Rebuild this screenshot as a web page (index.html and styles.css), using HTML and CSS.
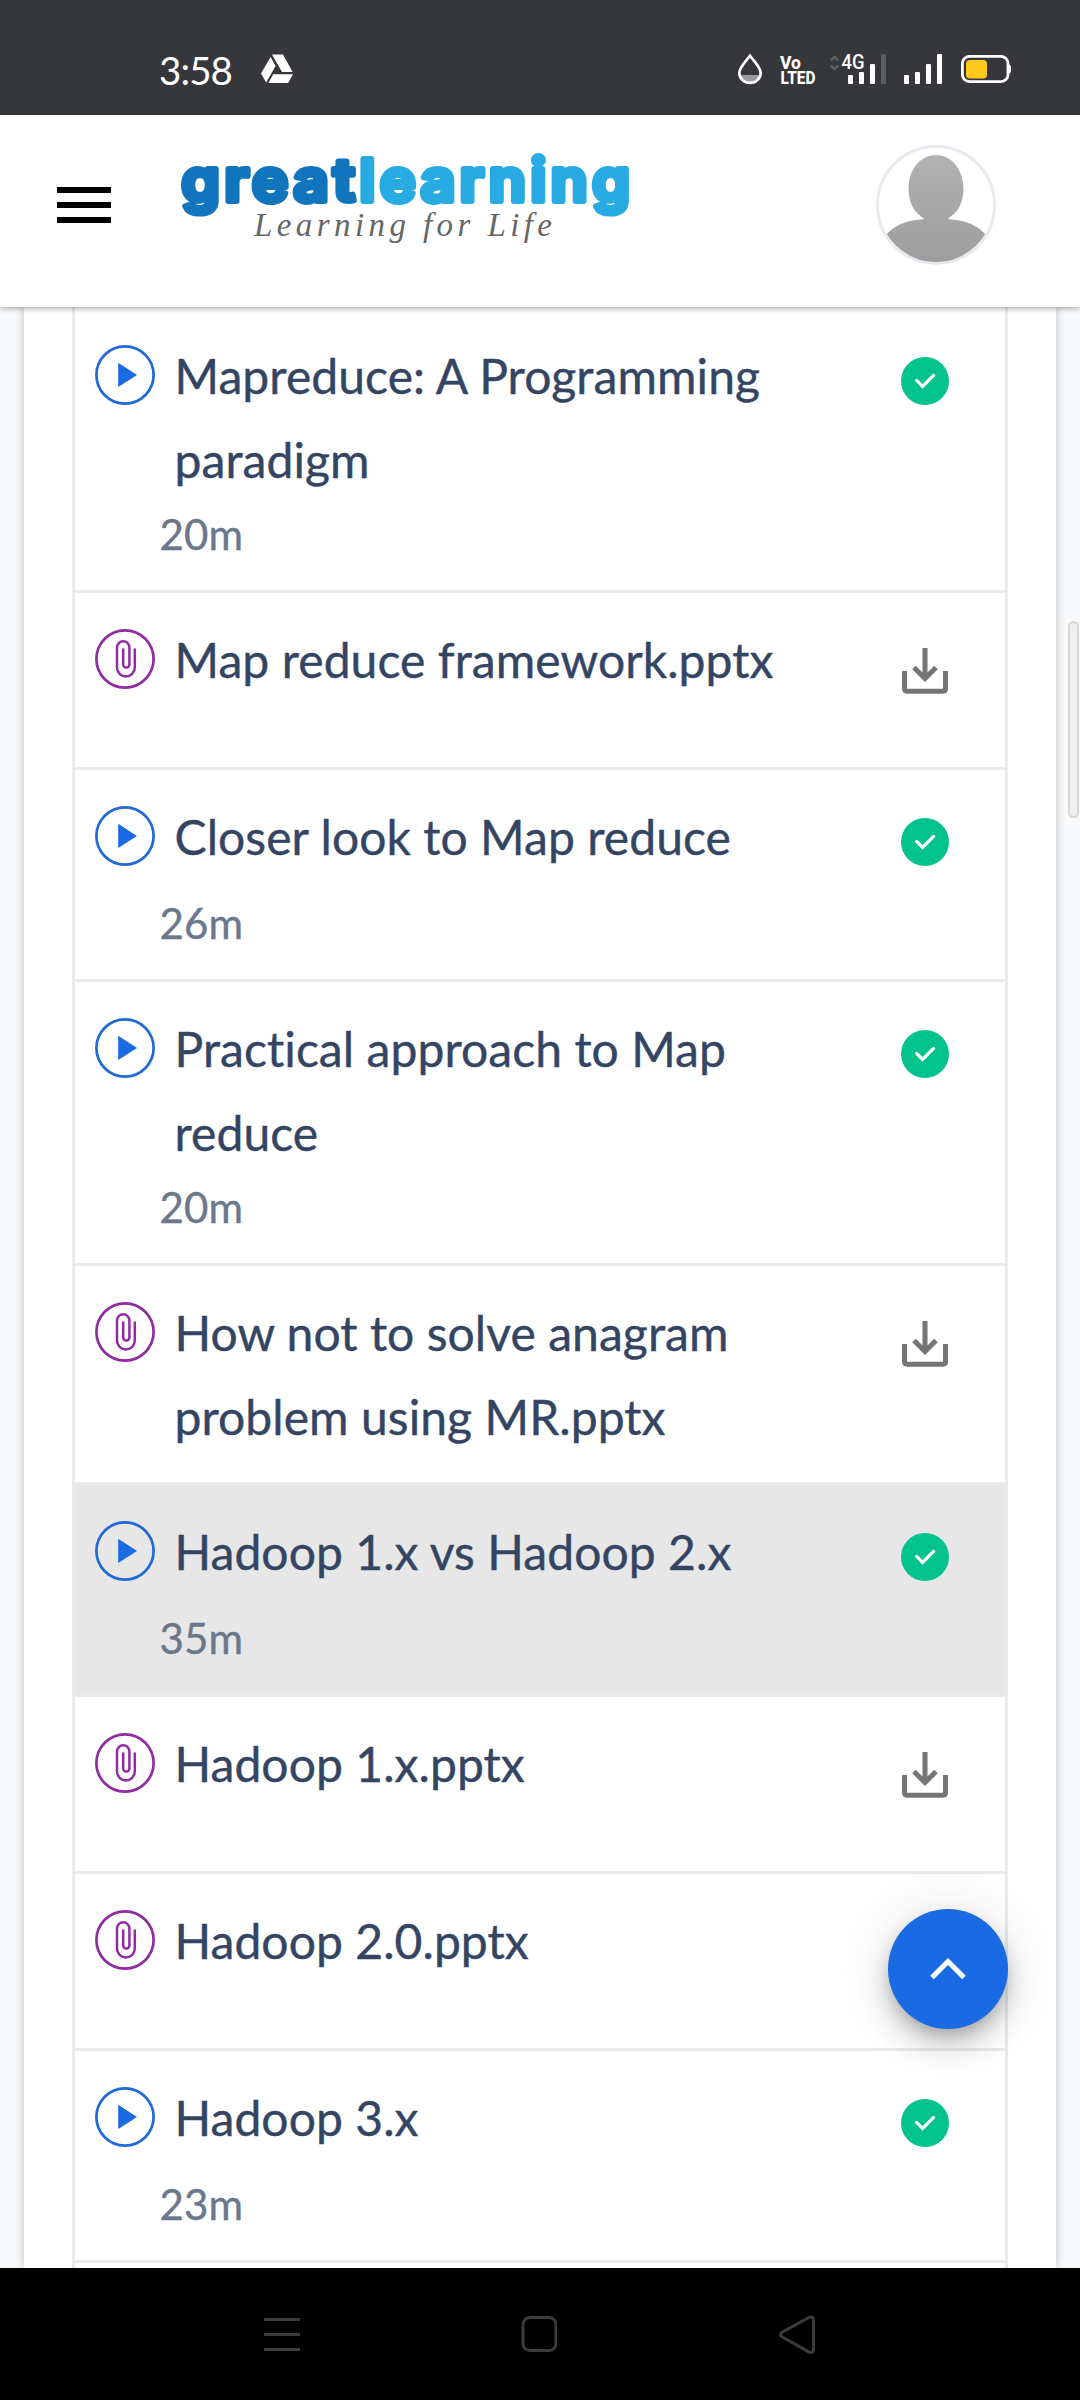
FILE: index.html
```html
<!DOCTYPE html>
<html lang="en">
<head>
<meta charset="utf-8">
<title>Great Learning</title>
<link rel="stylesheet" href="styles.css">
</head>
<body>
<svg width="0" height="0" class="sprite">
  <symbol id="play" viewBox="0 0 60 60"><circle cx="30" cy="30" r="28.6" fill="none" stroke="#1f69d8" stroke-width="2.7"/><path d="M23.2 17.7V42L42 29.9z" fill="#1a6ae4"/></symbol>
  <symbol id="clip" viewBox="0 0 60 60"><g fill="none" stroke="#902ba2" stroke-width="2.7"><circle cx="30" cy="30" r="28.6"/><path stroke-width="2.5" d="M39.8 19.5V38.5a8.9 8.9 0 0 1-17.8 0V18.5a6.2 6.2 0 0 1 12.4 0V35.5a3.1 3.1 0 0 1-6.2 0V19.5"/></g></symbol>
  <symbol id="done" viewBox="0 0 48 48"><circle cx="24" cy="24" r="24" fill="#02c38e"/><path d="M15.6 23.4 21.6 29.4 32.6 18.4" fill="none" stroke="#fff" stroke-width="3.2" stroke-linecap="round"/></symbol>
  <symbol id="download" viewBox="0 0 48 48"><g fill="none" stroke="#757575" stroke-width="5"><path d="M24 0V29M13 19.5 24 30.5 35 19.5"/><path d="M3.5 23V40.5Q3.5 43.2 6.2 43.2H41.8Q44.5 43.2 44.5 40.5V23"/></g></symbol>
</svg>
<div class="screen">
  <div class="status">
    <span class="clock">3:58</span>
    <svg class="drive" width="32" height="30" viewBox="261 54 32 30" fill="#fff"><path d="M272 54.4h11L292.6 72H282zM270.6 57l5 9-9.4 16.4-5.2-9zM273.2 74.3H293L288.2 83H268.4z"/></svg>
    <svg class="indicators" width="274" height="34" viewBox="738 52 274 34">
      <path d="M740.5 75h19c-1 5-5 7.500-9.500 7.500s-8.500-2.500-9.500-7.500z" fill="#9b9b9d"/>
      <path d="M750 55.800C746 61 739.300 67 739.300 73a10.700 9.800 0 0 0 21.400 0C760.700 67 754 61 750 55.800z" fill="none" stroke="#fff" stroke-width="2.700"/>
      <g fill="#fff" font-family="Roboto, sans-serif">
        <text x="780" y="68.500" font-size="19" font-weight="800" textLength="21" lengthAdjust="spacingAndGlyphs">Vo</text>
        <text x="780.500" y="84" font-size="19" font-weight="800" textLength="35" lengthAdjust="spacingAndGlyphs">LTED</text>
        <text x="841.500" y="69.200" font-size="20.500" font-weight="500" textLength="23" lengthAdjust="spacingAndGlyphs">4G</text>
      </g>
      <path d="M830.800 60.500l3.700-3.500 3.700 3.500M830.800 65.500l3.700 3.500 3.700-3.500" fill="none" stroke="#5d5e62" stroke-width="2.600"/>
      <g fill="#fff">
        <rect x="848" y="75" width="5" height="9" rx="1"/><rect x="859" y="72" width="5" height="12" rx="1"/><rect x="870" y="64" width="5" height="20" rx="1"/>
        <rect x="881" y="54" width="5" height="30" rx="1" fill="#5d5e62"/>
        <rect x="904" y="75" width="5" height="9" rx="1"/><rect x="915" y="72" width="5" height="12" rx="1"/><rect x="926" y="64" width="5" height="20" rx="1"/><rect x="937" y="54" width="5" height="30" rx="1"/>
        <path d="M1009 64.500q2 .5 2 2.500v4q0 2-2 2.500z"/>
      </g>
      <rect x="962.400" y="56.400" width="45.600" height="25.200" rx="7" fill="none" stroke="#fff" stroke-width="2.800"/>
      <rect x="966" y="60" width="21" height="18.500" rx="4" fill="#ffc91c"/>
    </svg>
  </div>
  <header class="header">
    <svg class="menu" width="54" height="36" viewBox="0 0 54 36"><path d="M0 0h54v6H0zM0 15h54v6H0zM0 30h54v6H0z"/></svg>
    <svg class="logo" width="452" height="100" viewBox="180 150 452 100">
      <g font-family="Inter, sans-serif" font-weight="600" font-size="58" letter-spacing="4.500" stroke-width="6" stroke-linejoin="round" stroke-linecap="round">
        <text x="181.500" y="200.500" fill="#1075bd" stroke="#1075bd" textLength="178" lengthAdjust="spacingAndGlyphs">great</text>
        <text x="359.500" y="200.500" fill="#28aae2" stroke="#28aae2" textLength="275" lengthAdjust="spacingAndGlyphs">learning</text>
      </g>
      <text x="254" y="236" font-family="'Liberation Serif', serif" font-style="italic" font-size="33" fill="#666" textLength="298" lengthAdjust="spacing">Learning for Life</text>
    </svg>
    <div class="avatar">
      <svg width="114" height="114" viewBox="3 3 114 114"><defs><linearGradient id="g" x2="0" y2="1"><stop stop-color="#b2b2b2"/><stop offset="1" stop-color="#9d9d9d"/></linearGradient></defs><path fill="url(#g)" d="M60 10C76 10 87.500 25 87.500 44 87.500 58 81.500 68 72 73.500Q73 74.500 78 74.800C92 76 103 82 110 90V117H10V90C17 82 28 76 42 74.800Q47 74.500 48 73.500C38.500 68 32.500 58 32.500 44 32.500 25 44 10 60 10z"/></svg>
    </div>
  </header>
  <main class="page">
    <section class="card">
      <ul class="list">
        <li class="row"><svg class="kind"><use href="#play"/></svg><div class="body"><p class="title">Mapreduce: A Programming paradigm</p><p class="time">20m</p></div><svg class="mark"><use href="#done"/></svg></li>
        <li class="row"><svg class="kind"><use href="#clip"/></svg><div class="body"><p class="title">Map reduce framework.pptx</p></div><svg class="mark get"><use href="#download"/></svg></li>
        <li class="row"><svg class="kind"><use href="#play"/></svg><div class="body"><p class="title">Closer look to Map reduce</p><p class="time">26m</p></div><svg class="mark"><use href="#done"/></svg></li>
        <li class="row"><svg class="kind"><use href="#play"/></svg><div class="body"><p class="title">Practical approach to Map reduce</p><p class="time">20m</p></div><svg class="mark"><use href="#done"/></svg></li>
        <li class="row"><svg class="kind"><use href="#clip"/></svg><div class="body"><p class="title">How not to solve anagram problem using MR.pptx</p></div><svg class="mark get"><use href="#download"/></svg></li>
        <li class="row active"><svg class="kind"><use href="#play"/></svg><div class="body"><p class="title">Hadoop 1.x vs Hadoop 2.x</p><p class="time">35m</p></div><svg class="mark"><use href="#done"/></svg></li>
        <li class="row"><svg class="kind"><use href="#clip"/></svg><div class="body"><p class="title">Hadoop 1.x.pptx</p></div><svg class="mark get"><use href="#download"/></svg></li>
        <li class="row"><svg class="kind"><use href="#clip"/></svg><div class="body"><p class="title">Hadoop 2.0.pptx</p></div></li>
        <li class="row"><svg class="kind"><use href="#play"/></svg><div class="body"><p class="title">Hadoop 3.x</p><p class="time">23m</p></div><svg class="mark"><use href="#done"/></svg></li>
        <li class="row"></li>
      </ul>
    </section>
    <div class="scrollbar"></div>
    <button class="to-top" aria-label="Back to top"><svg width="36" height="24" viewBox="0 0 36 24"><path d="M2 20.500 18 4.500 34 20.500" fill="none" stroke="#fff" stroke-width="5"/></svg></button>
  </main>
  <nav class="navbar">
    <svg width="36" height="40" viewBox="0 0 36 40"><path d="M0 4.500h36M0 19.500h36M0 34.500h36"/></svg>
    <svg width="36" height="40" viewBox="0 0 36 40"><rect x="2" y="2.500" width="33" height="33" rx="7"/></svg>
    <svg width="38" height="40" viewBox="0 0 38 40"><path d="M31.500 2.200 4 17.300Q1 19.500 4 21.700L31.500 37.300Q35.500 38 35.500 34.500V5Q35.500 1.500 31.500 2.200z"/></svg>
  </nav>
</div>
</body>
</html>
```
FILE: styles.css
```css
* { box-sizing: border-box; }
body { margin: 0; font-family: Lato, sans-serif; }
p, ul { margin: 0; padding: 0; }
svg { display: block; flex: none; }
.sprite { position: absolute; }

.screen { width: 1080px; height: 2400px; display: flex; flex-direction: column; overflow: hidden; }

.status { flex: none; height: 115px; display: flex; align-items: flex-start; background: #36373b; padding: 52px 68px 0 159px; }
.clock { width: 102px; color: #fff; font-size: 38.5px; line-height: 37px; letter-spacing: -.9px; white-space: nowrap; }
.drive { margin-top: 2px; }
.indicators { margin-left: auto; overflow: visible; }

.header { flex: none; height: 192px; display: flex; align-items: flex-start; padding: 30px 84px 0 57px; background: #fff; box-shadow: 0 1px 6px rgba(0, 0, 0, .4); position: relative; z-index: 1; }
.menu { margin-top: 42px; }
.logo { margin: 5px 0 0 69px; overflow: visible; }
.avatar { width: 120px; height: 120px; margin-left: auto; border: 3px solid #e9eaef; border-radius: 50%; overflow: hidden; }

.page { flex: 1; min-height: 0; overflow: hidden; position: relative; background: #f9fafc; padding: 0 24px; }
.card { background: #fff; height: 100%; padding: 0 48px; box-shadow: 0 0 9px rgba(0, 0, 0, .26); }
.list { list-style: none; border: 3px solid #e9eaee; border-width: 0 3px; padding-top: 2px; }
.row { display: flex; align-items: flex-start; min-height: 177px; padding: 24px 56px 24px 20px; border-bottom: 3px solid #e9eaee; }
.active { background: #e7e7e7; }
.kind { width: 60px; height: 60px; margin-top: 12px; }
.body { width: 660px; margin: 1px 0 -1px; padding-left: 4.5px; }
.title { min-height: 96px; padding-left: 15px; padding-right: 40px; font-size: 48px; line-height: 84px; letter-spacing: .07px; color: #344563; -webkit-text-stroke: .4px #344563; }
.time { font-size: 42px; line-height: 65px; letter-spacing: .1px; color: #6b778c; -webkit-text-stroke: .4px #6b778c; }
.mark { width: 48px; height: 48px; margin: 24px 0 0 auto; }
.get { margin-top: 31px; }

.scrollbar { position: absolute; top: 314px; right: 1px; width: 11px; height: 197px; border: 2px solid #d7d7d7; border-radius: 6px; background: #f0f0f0; }
.to-top { position: absolute; top: 1602px; left: 888px; width: 120px; height: 120px; border: 0; padding: 0; border-radius: 50%; background: #1a6ae4; display: grid; place-items: center; box-shadow: 0 9px 15px -3px rgba(0, 0, 0, .2), 0 18px 30px rgba(0, 0, 0, .14), 0 3px 54px rgba(0, 0, 0, .12); }

.navbar { flex: none; height: 132px; background: #000; display: flex; justify-content: space-between; padding: 47px 264px 0 264px; fill: none; stroke: #3c3c3c; stroke-width: 3; }
```
